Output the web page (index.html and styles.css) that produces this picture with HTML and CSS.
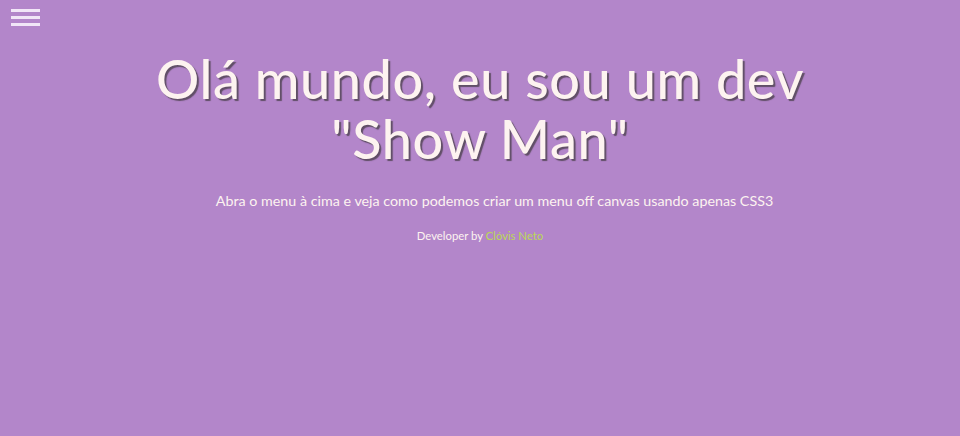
FILE: index.html
```html
<!DOCTYPE html>
<html lang="pt-BR">
<head>
<meta charset="utf-8">
<title>Menu off canvas</title>
<link rel="stylesheet" href="styles.css">
</head>
<body>
<header class="top">
  <label class="menu-toggle" aria-label="Abrir menu">
    <span class="bar"></span>
    <span class="bar"></span>
    <span class="bar"></span>
  </label>
</header>
<main class="hero">
  <h1 class="title">Olá mundo, eu sou um dev<br>"Show Man"</h1>
  <p class="lead">Abra o menu à cima e veja como podemos criar um menu off canvas usando apenas CSS3</p>
  <p class="credit">Developer by <a href="#">Clóvis Neto</a></p>
</main>
</body>
</html>
```
FILE: styles.css
```css
html, body {
  margin: 0;
  padding: 0;
}
body {
  background: #b386ca;
  font-family: Lato, "Open Sans", sans-serif;
  color: #fdf3f0;
  height: 436px;
  overflow: hidden;
}
.top {
  padding: 9px 0 0 11px;
  height: 26px;
}
.menu-toggle {
  display: flex;
  flex-direction: column;
  gap: 4px;
  width: 29px;
  cursor: pointer;
}
.bar {
  display: block;
  height: 3px;
  background: #f1e6f7;
}
.hero {
  text-align: center;
}
.title {
  margin: 14px 0 0;
  font-size: 54px;
  line-height: 60px;
  font-weight: 500;
  letter-spacing: 0.6px;
  color: #fdf3f0;
  text-shadow: 2px 2px 1px rgba(70, 60, 70, 0.75);
}
.lead {
  margin: 22px 0 0;
  padding-left: 29px;
  font-size: 14.3px;
  line-height: 20px;
}
.credit {
  margin: 17px 0 0;
  font-size: 11.3px;
  line-height: 16px;
}
.credit a {
  color: #bada55;
  text-decoration: none;
}
```
